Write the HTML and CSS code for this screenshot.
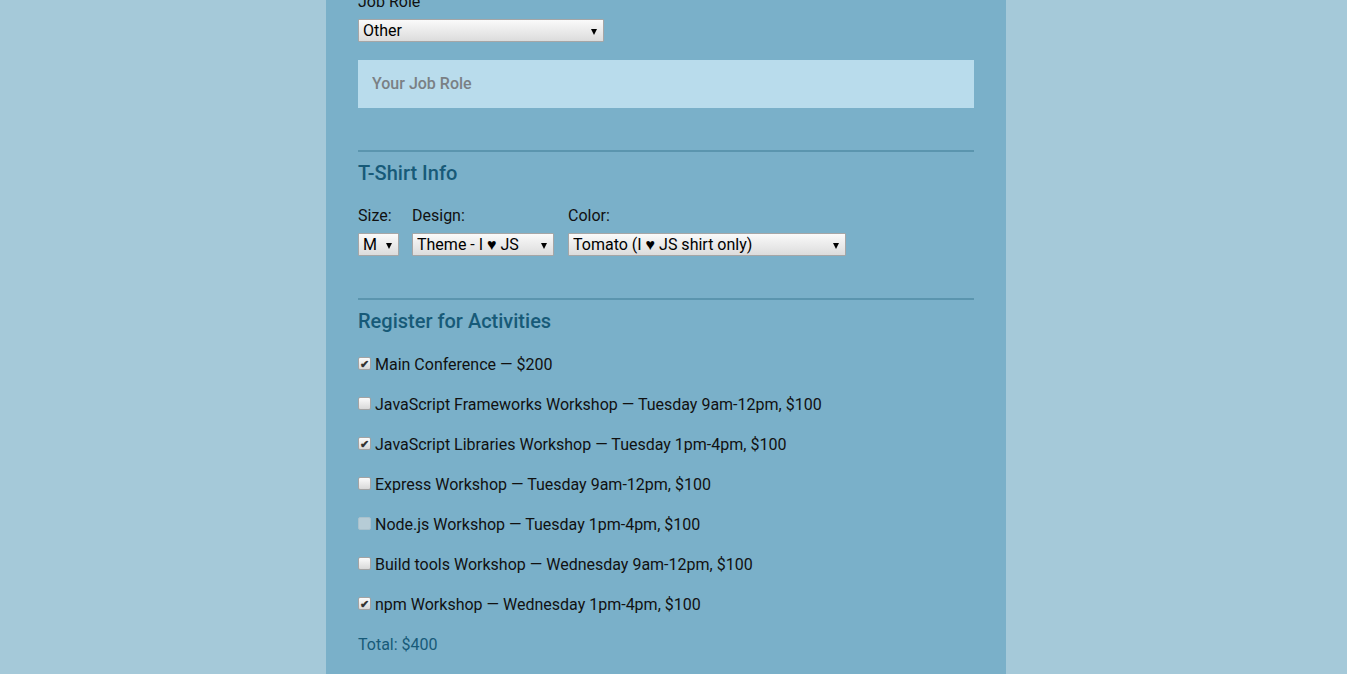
FILE: index.html
```html
<!DOCTYPE html>
<html lang="en">
<head>
<meta charset="utf-8">
<title>Register</title>
<link rel="stylesheet" href="styles.css">
</head>
<body>
<main class="container">
  <form class="form">
    <section class="basic">
      <label class="label" for="title">Job Role</label>
      <div class="select-wrap select-role">
        <select id="title" class="select"><option>Other</option></select>
      </div>
      <input class="text-input" type="text" placeholder="Your Job Role">
    </section>

    <section class="group">
      <h2 class="legend">T-Shirt Info</h2>
      <div class="shirt">
        <div class="shirt-col col-size">
          <label class="label">Size:</label>
          <div class="select-wrap select-size"><select class="select"><option>M</option></select></div>
        </div>
        <div class="shirt-col col-design">
          <label class="label">Design:</label>
          <div class="select-wrap select-design"><select class="select"><option>Theme - I ♥ JS</option></select></div>
        </div>
        <div class="shirt-col col-color">
          <label class="label">Color:</label>
          <div class="select-wrap select-color"><select class="select"><option>Tomato (I ♥ JS shirt only)</option></select></div>
        </div>
      </div>
    </section>

    <section class="group">
      <h2 class="legend">Register for Activities</h2>
      <ul class="activities">
        <li class="activity"><label><input type="checkbox" class="check" checked> Main Conference — $200</label></li>
        <li class="activity"><label><input type="checkbox" class="check"> JavaScript Frameworks Workshop — Tuesday 9am-12pm, $100</label></li>
        <li class="activity"><label><input type="checkbox" class="check" checked> JavaScript Libraries Workshop — Tuesday 1pm-4pm, $100</label></li>
        <li class="activity"><label><input type="checkbox" class="check"> Express Workshop — Tuesday 9am-12pm, $100</label></li>
        <li class="activity"><label><input type="checkbox" class="check" disabled> Node.js Workshop — Tuesday 1pm-4pm, $100</label></li>
        <li class="activity"><label><input type="checkbox" class="check"> Build tools Workshop — Wednesday 9am-12pm, $100</label></li>
        <li class="activity"><label><input type="checkbox" class="check" checked> npm Workshop — Wednesday 1pm-4pm, $100</label></li>
      </ul>
      <p class="total">Total: $400</p>
    </section>
  </form>
</main>
</body>
</html>
```

FILE: styles.css
```css
html, body {
  margin: 0;
  padding: 0;
}
body {
  background: #a5c9d9;
  font-family: Roboto, "Liberation Sans", sans-serif;
  font-size: 16px;
  color: #111;
  min-height: 100vh;
  padding-right: 15px;
}
.container {
  width: 616px;
  margin: 0 auto;
  padding: 0 32px 40px;
  background: #7ab0c9;
  min-height: 100vh;
  overflow: hidden;
}
.form {
  margin-top: -8px;
  display: flex;
  flex-direction: column;
}
.label {
  display: block;
  font-size: 16px;
  line-height: 20px;
}
.select-wrap {
  position: relative;
  margin-top: 7px;
  height: 23px;
}
.select-wrap::after {
  content: "";
  position: absolute;
  right: 7px;
  top: 10px;
  width: 0;
  height: 0;
  border-left: 3px solid transparent;
  border-right: 3px solid transparent;
  border-top: 6px solid #000;
  pointer-events: none;
}
.select {
  -webkit-appearance: none;
  appearance: none;
  display: block;
  box-sizing: border-box;
  width: 100%;
  height: 23px;
  margin: 0;
  padding: 0 14px 0 4px;
  border: 1px solid #a6a6a6;
  border-radius: 1px;
  background: linear-gradient(#fafafa, #dcdcdc);
  font-family: Roboto, "Liberation Sans", sans-serif;
  font-size: 16px;
  line-height: 21px;
  color: #000;
  outline: none;
}
.select-role { width: 246px; }
.text-input {
  display: block;
  box-sizing: border-box;
  width: 100%;
  height: 48px;
  margin-top: 18px;
  padding: 0 14px 2px;
  border: none;
  background: #b9dcec;
  font-family: Roboto, "Liberation Sans", sans-serif;
  font-size: 16px;
  outline: none;
}
.text-input::placeholder {
  color: #7a8084;
  font-weight: 500;
}
.group {
  margin-top: 42px;
  border-top: 2px solid #5b95ae;
}
.legend {
  margin: 9px 0 0;
  font-size: 20px;
  line-height: 24px;
  font-weight: 500;
  color: #175a78;
}
.shirt {
  display: flex;
  margin-top: 21px;
}
.shirt .select-wrap { margin-top: 7px; }
.col-size { margin-right: 13px; }
.col-design { margin-right: 14px; }
.select-size { width: 41px; }
.select-design { width: 142px; }
.select-color { width: 278px; }
.activities {
  list-style: none;
  margin: 22px 0 0;
  padding: 0;
  display: flex;
  flex-direction: column;
  gap: 20px;
}
.activity {
  line-height: 20px;
}
.check {
  -webkit-appearance: none;
  appearance: none;
  position: relative;
  box-sizing: border-box;
  margin: 0;
  width: 13px;
  height: 13px;
  vertical-align: 0;
  border: 1px solid #a3a3a3;
  border-radius: 2px;
  background: linear-gradient(#fbfbfb, #d8d8d8);
}
.check:checked::before {
  content: "✔";
  position: absolute;
  left: 1px;
  top: -2px;
  font-size: 11px;
  line-height: 16px;
  font-weight: 700;
  color: #333;
}
.check:disabled {
  border-color: #a9c1cc;
  background: #b6ccd6;
}
.total {
  margin: 20px 0 0;
  line-height: 20px;
  color: #175a78;
}
```
